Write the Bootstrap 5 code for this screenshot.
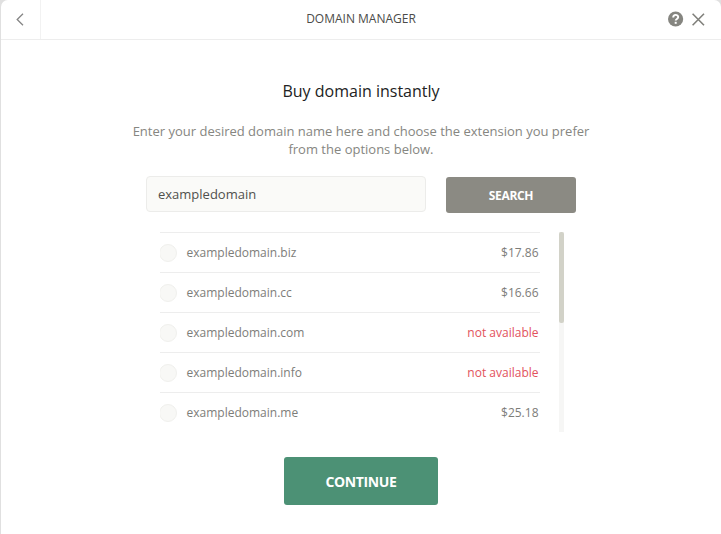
<!DOCTYPE html>
<html lang="en">
<head>
<meta charset="utf-8">
<meta name="viewport" content="width=device-width, initial-scale=1">
<title>Domain Manager</title>
<link href="https://cdn.jsdelivr.net/npm/bootstrap@5.3.0/dist/css/bootstrap.min.css" rel="stylesheet">
<style>
body{font-family:"Open Sans","Noto Sans",sans-serif;font-size:12px;color:#868681;background:#e0e0e0;height:534px;overflow:hidden}
.dialog-panel{background:#fff;height:534px;margin-left:1px;border-radius:7px 7px 0 0}
.dialog-head{height:40px;border-bottom:1px solid #ededed}
.head-side{width:80px}
.back-btn{width:40px;height:39px;border:0;border-right:1px solid #f2f2f2;background:none;padding:0 1px 0 0}
.icon-btn{border:0;background:none;padding:0 0 1px;line-height:0}
.head-title{font-size:12px;line-height:18px;color:#4b4b49;padding-bottom:2px}
.page-title{font-size:16px;line-height:24px;color:#222;margin:39px 0 0}
.intro{font-size:13px;line-height:18px;width:480px;margin:19px 0 0}
.search-row{width:430px;margin-top:18px;gap:20px}
.search-row .form-control{width:280px;height:36px;background:#fafaf8;border:1px solid #ececea;border-radius:4px;padding:0 11px;font-size:13px;color:#50504d}
.btn-search{width:130px;height:36px;margin-top:1px;background:#8b8a83;color:#fff;font-size:12px;font-weight:700;letter-spacing:-.35px;border-radius:3px;padding:2px 0 0}
.domain-area{width:404px;height:200px;margin:19px 0 0 1px}
.domain-list{width:380px;height:200px;overflow:hidden}
.domain-list .list-group-item{height:40px;border:0;border-top:1px solid #ededed;padding:0 1px 0 0;color:#7d7d79;background:none}
.domain-list .form-check-input{width:18px;height:18px;margin:1px 10px 0 -1px;background-color:#f8f8f6;border-color:#f0f0ed}
.domain-list .unavailable{color:#e2525c}
.scroll-track{width:5px;height:200px;background:#f6f6f5}
.scroll-thumb{height:91px;background:#d2d2c8;border-radius:2px}
.btn-continue{width:154px;height:48px;margin-top:25px;background:#4c9175;color:#fff;font-size:14px;font-weight:700;letter-spacing:-.4px;border-radius:3px;padding:0}
</style>
</head>
<body>
<main class="dialog-panel">
  <header class="dialog-head d-flex align-items-center justify-content-between">
    <div class="head-side">
      <button class="back-btn d-flex align-items-center justify-content-center" aria-label="Back">
        <svg width="8" height="13" viewBox="0 0 8 13" fill="none" stroke="#858585" stroke-width="1.3"><path d="M7 .8 1.2 6.5 7 12.2"/></svg>
      </button>
    </div>
    <h1 class="head-title fw-normal m-0">DOMAIN MANAGER</h1>
    <div class="head-side d-flex justify-content-end align-items-center gap-2 pe-3">
      <button class="icon-btn" aria-label="Help">
        <svg width="16" height="16" viewBox="0 0 16 16"><circle cx="7.6" cy="8" r="7.6" fill="#858580"/><path d="M5.2 6.4c0-3.3 5-3.3 5-.3 0 1.9-2.5 1.8-2.5 3.5" fill="none" stroke="#fff" stroke-width="1.9"/><rect x="6.7" y="10.8" width="2" height="2" fill="#fff"/></svg>
      </button>
      <button class="icon-btn" aria-label="Close">
        <svg width="13" height="13" viewBox="0 0 13 13" stroke="#80807b" stroke-width="1.6"><path d="M.6.8l11.4 11.4M12 .8.6 12.2"/></svg>
      </button>
    </div>
  </header>
  <section class="d-flex flex-column align-items-center">
    <h2 class="page-title fw-normal">Buy domain instantly</h2>
    <p class="intro text-center">Enter your desired domain name here and choose the extension you prefer from the options below.</p>
    <form class="search-row d-flex">
      <input class="form-control" type="text" value="exampledomain" aria-label="Domain name">
      <button class="btn btn-search" type="button">SEARCH</button>
    </form>
    <div class="domain-area d-flex justify-content-between">
      <ul class="domain-list list-group list-group-flush">
        <li class="list-group-item d-flex align-items-center"><input class="form-check-input" type="radio" name="domain" aria-label="biz"><span>exampledomain.biz</span><span class="ms-auto">$17.86</span></li>
        <li class="list-group-item d-flex align-items-center"><input class="form-check-input" type="radio" name="domain" aria-label="cc"><span>exampledomain.cc</span><span class="ms-auto">$16.66</span></li>
        <li class="list-group-item d-flex align-items-center"><input class="form-check-input" type="radio" name="domain" aria-label="com"><span>exampledomain.com</span><span class="ms-auto unavailable">not available</span></li>
        <li class="list-group-item d-flex align-items-center"><input class="form-check-input" type="radio" name="domain" aria-label="info"><span>exampledomain.info</span><span class="ms-auto unavailable">not available</span></li>
        <li class="list-group-item d-flex align-items-center"><input class="form-check-input" type="radio" name="domain" aria-label="me"><span>exampledomain.me</span><span class="ms-auto">$25.18</span></li>
      </ul>
      <div class="scroll-track"><div class="scroll-thumb"></div></div>
    </div>
    <button class="btn btn-continue" type="button">CONTINUE</button>
  </section>
</main>
<script src="https://cdn.jsdelivr.net/npm/bootstrap@5.3.0/dist/js/bootstrap.bundle.min.js"></script>
</body>
</html>
